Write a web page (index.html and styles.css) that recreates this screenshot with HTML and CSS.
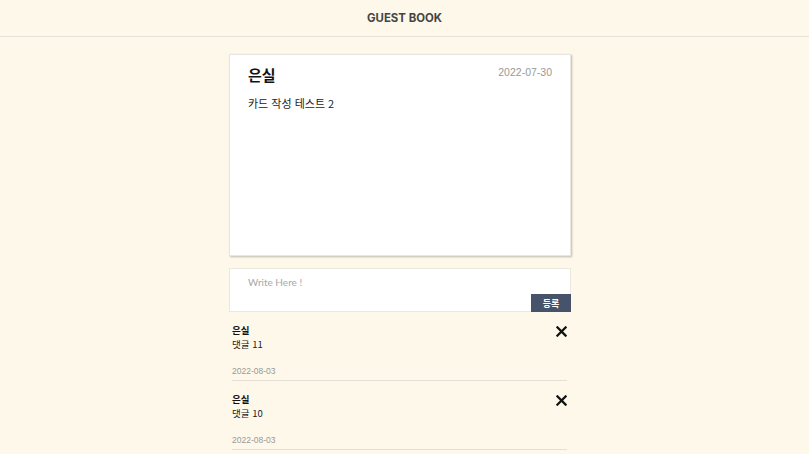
FILE: index.html
```html
<!DOCTYPE html>
<html lang="ko">
<head>
<meta charset="utf-8">
<link rel="stylesheet" href="styles.css">
</head>
<body>
<header class="header">GUEST BOOK</header>
<main class="main">
  <section class="card">
    <div class="card-top">
      <h2 class="card-name">은실</h2>
      <span class="card-date">2022-07-30</span>
    </div>
    <p class="card-text">카드 작성 테스트 2</p>
  </section>
  <form class="write">
    <div class="write-placeholder">Write Here !</div>
    <button type="button" class="write-btn">등록</button>
  </form>
  <ul class="comments">
    <li class="comment">
      <div class="comment-head">
        <div>
          <div class="comment-name">은실</div>
          <div class="comment-text">댓글 11</div>
        </div>
        <svg class="x" viewBox="0 0 12 12" width="11" height="11"><path d="M1.5 1.5L10.5 10.5M10.5 1.5L1.5 10.5" stroke="#111" stroke-width="2.4" stroke-linecap="square"/></svg>
      </div>
      <div class="comment-date">2022-08-03</div>
    </li>
    <li class="comment">
      <div class="comment-head">
        <div>
          <div class="comment-name">은실</div>
          <div class="comment-text">댓글 10</div>
        </div>
        <svg class="x" viewBox="0 0 12 12" width="11" height="11"><path d="M1.5 1.5L10.5 10.5M10.5 1.5L1.5 10.5" stroke="#111" stroke-width="2.4" stroke-linecap="square"/></svg>
      </div>
      <div class="comment-date">2022-08-03</div>
    </li>
  </ul>
</main>
</body>
</html>
```
FILE: styles.css
```css
* { box-sizing: border-box; }
html, body { margin: 0; padding: 0; }
body {
  background: #fef8ea;
  font-family: "Liberation Sans", "Noto Sans CJK KR", sans-serif;
  color: #222;
  overflow: hidden;
}
.header {
  height: 37px;
  border-bottom: 1px solid #e6e2d8;
  display: flex;
  align-items: center;
  justify-content: center;
  font-family: Inter, "Noto Sans", sans-serif;
  font-size: 11.4px;
  font-weight: 700;
  color: #444;
}
.main {
  width: 342px;
  margin-left: calc(50% - 175.5px);
  padding-top: 17px;
}
.card {
  width: 342px;
  height: 202px;
  background: #fff;
  border: 1px solid #e8e6e0;
  box-shadow: 1px 1px 2px rgba(0,0,0,0.25);
  padding: 10px 18px 0 18px;
}
.card-top {
  display: flex;
  justify-content: space-between;
  align-items: flex-start;
}
.card-name {
  margin: 0;
  font-family: "Noto Sans CJK KR", sans-serif;
  font-size: 15px;
  font-weight: 700;
  line-height: 20px;
  color: #111;
}
.card-date {
  font-size: 10.5px;
  color: #999;
  line-height: 14px;
}
.card-text {
  margin: 10px 0 0 0;
  font-family: "Noto Sans CJK KR", sans-serif;
  font-size: 11px;
  color: #222;
  line-height: 16px;
}
.write {
  margin-top: 12px;
  width: 342px;
  height: 44px;
  background: #fff;
  border: 1px solid #ece8de;
  position: relative;
  padding: 7px 18px;
}
.write-placeholder {
  font-family: Lato, sans-serif;
  font-size: 10px;
  font-weight: 400;
  color: #a8a8a8;
  line-height: 13px;
}
.write-btn {
  position: absolute;
  right: -1px;
  bottom: -1px;
  width: 40px;
  height: 18px;
  border: 0;
  background: #46536a;
  color: #fff;
  font-family: "Noto Sans CJK KR", sans-serif;
  font-size: 9px;
  font-weight: 700;
  padding: 0;
}
.comments {
  list-style: none;
  margin: 0;
  padding: 0 4px 0 3px;
}
.comment {
  border-bottom: 1px solid #e4e0d6;
  padding-top: 12px;
  height: 69px;
}
.comment-head {
  display: flex;
  justify-content: space-between;
  align-items: flex-start;
}
.comment-name {
  font-family: "Noto Sans CJK KR", sans-serif;
  font-size: 9.5px;
  font-weight: 700;
  color: #111;
  line-height: 13px;
}
.comment-text {
  font-family: "Noto Sans CJK KR", sans-serif;
  font-size: 9.5px;
  color: #222;
  line-height: 14px;
}
.x { margin-top: 2px; }
.comment-date {
  margin-top: 14px;
  font-size: 8.5px;
  color: #999;
  line-height: 12px;
}
```
